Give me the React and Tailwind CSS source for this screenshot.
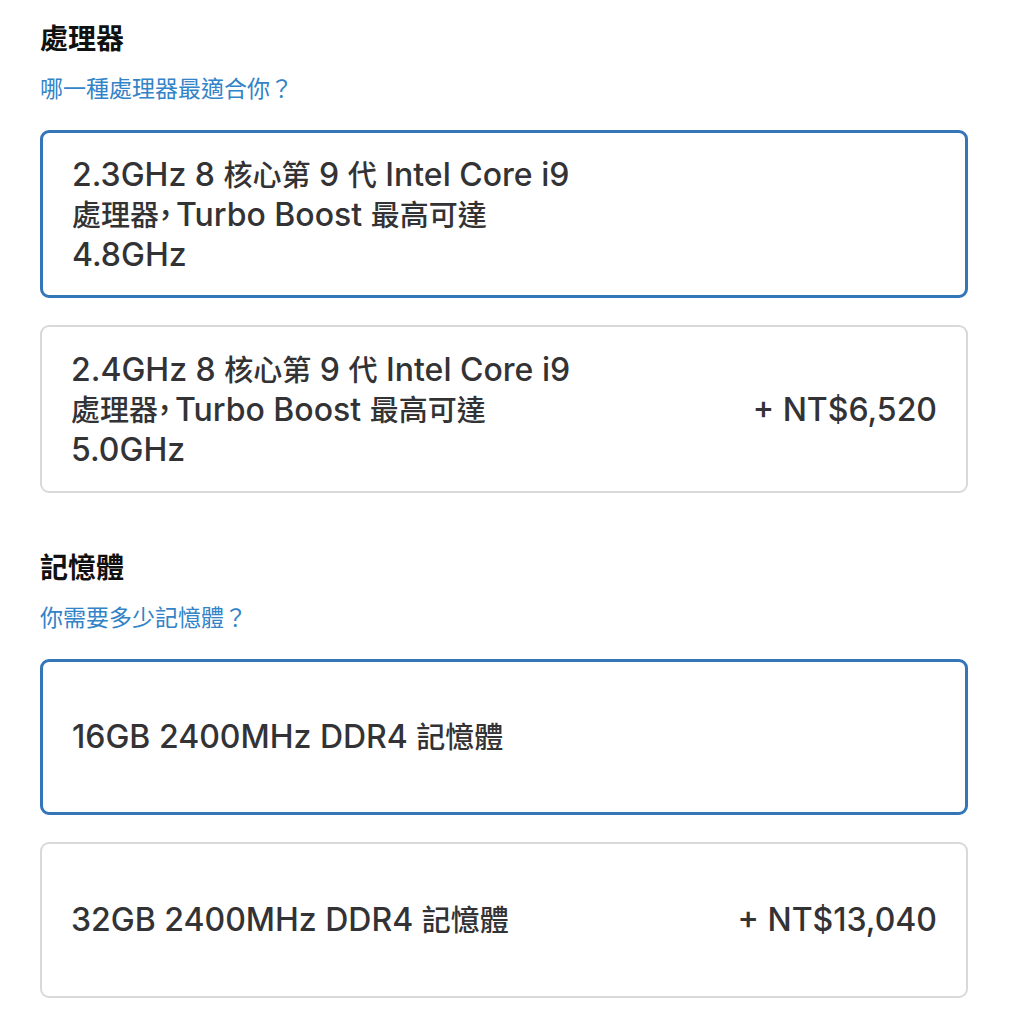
const CJK = /([\u3400-\u9fff]+)/

// Latin and CJK runs are set at slightly different sizes to match the reference widths
function Mixed({ text }) {
  return text.split(CJK).map((part, i) =>
    CJK.test(part) ? (
      <span key={i} className="text-[29px] leading-[30px]">{part}</span>
    ) : (
      <span key={i}>{part}</span>
    )
  )
}

function Comma() {
  // narrow full-width comma as in the reference
  return <span className="inline-block text-[29px] leading-[30px] -ml-[8px] -mr-[4px]">，</span>
}

function Option({ lines, price, selected, single }) {
  const border = selected
    ? 'border-[3px] border-[#3476b8]'
    : 'border-2 border-[#d9d9dc]'
  const pad = single
    ? selected ? 'py-[55px]' : 'py-[56px]'
    : selected ? 'pt-[22px] pb-[20px]' : 'pt-[23px] pb-[21px]'
  return (
    <div className={`rounded-[9px] bg-white flex items-center justify-between pl-[29px] pr-[29px] ${border} ${pad}`}>
      <div className="text-[32px] leading-[40px] font-medium text-[#333336]">
        {lines.map((l, i) => (
          <div key={i} className="h-[40px]">{l}</div>
        ))}
      </div>
      {price && <div className="text-[32px] leading-[40px] font-medium text-[#333336]">{price}</div>}
    </div>
  )
}

function Section({ title, subtitle, children, first }) {
  return (
    <section className={first ? 'pt-[22px]' : 'mt-[58px]'}>
      <h2 className="text-[28px] leading-[34px] font-bold text-[#111111]">{title}</h2>
      <p className="mt-[19px] text-[23px] leading-[28px] text-[#3283c7]">{subtitle}</p>
      <div className="mt-[27px] flex flex-col gap-[27px]">{children}</div>
    </section>
  )
}

export default function App() {
  return (
    <div
      className="w-[1018px] min-h-[1024px] bg-white pl-[40px] pr-[50px] antialiased"
      style={{ fontFamily: 'Inter, "Noto Sans CJK TC", sans-serif' }}
    >
      <Section first title="處理器" subtitle="哪一種處理器最適合你？">
        <Option
          selected
          lines={[
            <Mixed text="2.3GHz 8 核心第 9 代 Intel Core i9" />,
            <><Mixed text="處理器" /><Comma /><Mixed text="Turbo Boost 最高可達" /></>,
            '4.8GHz',
          ]}
        />
        <Option
          lines={[
            <Mixed text="2.4GHz 8 核心第 9 代 Intel Core i9" />,
            <><Mixed text="處理器" /><Comma /><Mixed text="Turbo Boost 最高可達" /></>,
            '5.0GHz',
          ]}
          price="+ NT$6,520"
        />
      </Section>
      <Section title="記憶體" subtitle="你需要多少記憶體？">
        <Option selected single lines={[<Mixed text="16GB 2400MHz DDR4 記憶體" />]} />
        <Option single lines={[<Mixed text="32GB 2400MHz DDR4 記憶體" />]} price="+ NT$13,040" />
      </Section>
    </div>
  )
}
